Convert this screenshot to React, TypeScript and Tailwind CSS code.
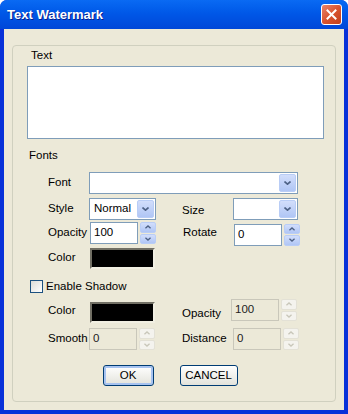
import React from 'react';

const font = { fontFamily: '"Liberation Sans", Arial, sans-serif' };

function Chevron({ up = false, color = '#4D6185', size = 7 }: { up?: boolean; color?: string; size?: number }) {
  return (
    <svg width={size} height={Math.round(size * 0.6)} viewBox="0 0 7 4" className={up ? 'rotate-180' : ''}>
      <path d="M0.5 0.5 L3.5 3.2 L6.5 0.5" fill="none" stroke={color} strokeWidth="1.6" />
    </svg>
  );
}

function Combo({ value = '', width }: { value?: string; width: string }) {
  return (
    <div className={`${width} h-[22px] flex items-stretch bg-white border border-[#7F9DB9] p-px`}>
      <div className="flex-1 flex items-center pl-[3px] text-[11.5px] text-black">{value}</div>
      <div className="w-[17px] flex items-center justify-center rounded-[2px] border border-[#B9CDF6] bg-gradient-to-b from-[#D2DEFB] to-[#B0C6F5]">
        <Chevron />
      </div>
    </div>
  );
}

function Spin({ value, disabled = false }: { value: string; disabled?: boolean }) {
  return (
    <div className="flex items-stretch h-[22px] gap-[2px]">
      <div
        className={`w-[48px] flex items-center pl-[3px] text-[11.5px] border ${
          disabled ? 'border-[#C9C7BA] bg-[#ECE9D8] text-[#222]' : 'border-[#7F9DB9] bg-white text-black'
        }`}
      >
        {value}
      </div>
      <div className="w-[16px] flex flex-col gap-px">
        {[true, false].map(up => (
          <div
            key={String(up)}
            className={`flex-1 flex items-center justify-center rounded-[2px] border ${
              disabled
                ? 'border-[#E3E1D6] bg-[#F4F3EE]'
                : 'border-[#B9CDF6] bg-gradient-to-b from-[#D2DEFB] to-[#B0C6F5]'
            }`}
          >
            <Chevron up={up} size={6} color={disabled ? '#C9C7BA' : '#4D6185'} />
          </div>
        ))}
      </div>
    </div>
  );
}

function Swatch({ className = '' }: { className?: string }) {
  return (
    <div
      className={`w-[65px] h-[21px] bg-black border-2 border-t-[#716F64] border-l-[#716F64] border-b-[#F1EFE2] border-r-[#F1EFE2] ${className}`}
    />
  );
}

function Label({ children, w, className = '' }: { children: React.ReactNode; w: string; className?: string }) {
  return <div className={`${w} text-[11.5px] text-black ${className}`}>{children}</div>;
}

export default function App() {
  return (
    <div className="w-[348px] h-[414px] flex flex-col bg-[#0831D9] rounded-t-[7px] overflow-hidden" style={font}>
      {/* title bar */}
      <div className="h-[29px] flex items-center justify-between pl-[7px] pr-[6px] bg-gradient-to-b from-[#0A6AF3] via-[#0056E6] to-[#0047D8]">
        <span className="text-white font-bold text-[13px] [text-shadow:1px_1px_0_#0A1E8C]">Text Watermark</span>
        <div className="w-[21px] h-[21px] rounded-[3px] border border-white bg-gradient-to-br from-[#E8836A] via-[#D9542F] to-[#C1401C] flex items-center justify-center">
          <svg width="11" height="11" viewBox="0 0 11 11">
            <path d="M1.5 1.5 L9.5 9.5 M9.5 1.5 L1.5 9.5" stroke="white" strokeWidth="2" strokeLinecap="square" />
          </svg>
        </div>
      </div>

      {/* client area */}
      <div className="flex-1 mx-[4px] mb-[4px] bg-[#ECE9D8] pt-[16px] px-[8px] pb-[8px] flex">
        <div className="flex-1 border border-[#D0D0BF] rounded-[4px] flex flex-col">
          <div className="ml-[18px] mt-[2px] h-[14px] leading-[14px] text-[11.5px] text-black">Text</div>
          <div className="ml-[14px] mt-[4px] w-[297px] h-[73px] bg-white border border-[#7F9DB9]" />

          <div className="ml-[16px] mt-[9px] h-[14px] leading-[14px] text-[11.5px] text-black">Fonts</div>

          <div className="ml-[35px] mt-[10px] flex flex-col">
            <div className="flex items-center h-[22px]">
              <Label w="w-[41px]">Font</Label>
              <Combo width="w-[209px]" />
            </div>
            <div className="flex items-center h-[22px] mt-[4px]">
              <Label w="w-[41px]">Style</Label>
              <Combo width="w-[67px]" value="Normal" />
              <div className="w-[26px]" />
              <Label w="w-[51px]" className="mt-[3px]">Size</Label>
              <Combo width="w-[65px]" />
            </div>
            <div className="flex items-center h-[22px] mt-[2px]">
              <Label w="w-[42px]">Opacity</Label>
              <Spin value="100" />
              <div className="w-[27px]" />
              <Label w="w-[51px]">Rotate</Label>
              <div className="mt-[3px]">
                <Spin value="0" />
              </div>
            </div>
            <div className="flex items-center h-[22px] mt-[3px]">
              <Label w="w-[42px]">Color</Label>
              <Swatch />
            </div>
          </div>

          <div className="ml-[17px] mt-[11px] flex items-center gap-[3px] h-[13px]">
            <div className="w-[13px] h-[13px] border border-[#1C5180] bg-gradient-to-br from-[#DCDCD7] to-white" />
            <span className="text-[11.5px] text-black">Enable Shadow</span>
          </div>

          <div className="ml-[35px] mt-[6px] flex flex-col">
            <div className="flex items-start h-[23px]">
              <Label w="w-[42px]" className="mt-[3px]">Color</Label>
              <Swatch className="mt-[3px]" />
              <div className="w-[27px]" />
              <Label w="w-[49px]" className="mt-[6px]">Opacity</Label>
              <Spin value="100" disabled />
            </div>
            <div className="flex items-center h-[22px] mt-[6px]">
              <Label w="w-[41px]">Smooth</Label>
              <Spin value="0" disabled />
              <div className="w-[27px]" />
              <Label w="w-[51px]">Distance</Label>
              <Spin value="0" disabled />
            </div>
          </div>

          <div className="mt-[15px] flex justify-center gap-[26px] pr-[8px]">
            <button className="w-[51px] h-[21px] rounded-[3px] border border-[#003C74] bg-gradient-to-b from-white to-[#E3E3DB] shadow-[inset_0_0_0_2px_#A7C3F0] text-[11.5px] text-black">
              OK
            </button>
            <button className="w-[58px] h-[21px] rounded-[3px] border border-[#003C74] bg-gradient-to-b from-white to-[#E3E3DB] text-[11.5px] text-black">
              CANCEL
            </button>
          </div>
        </div>
      </div>
    </div>
  );
}
